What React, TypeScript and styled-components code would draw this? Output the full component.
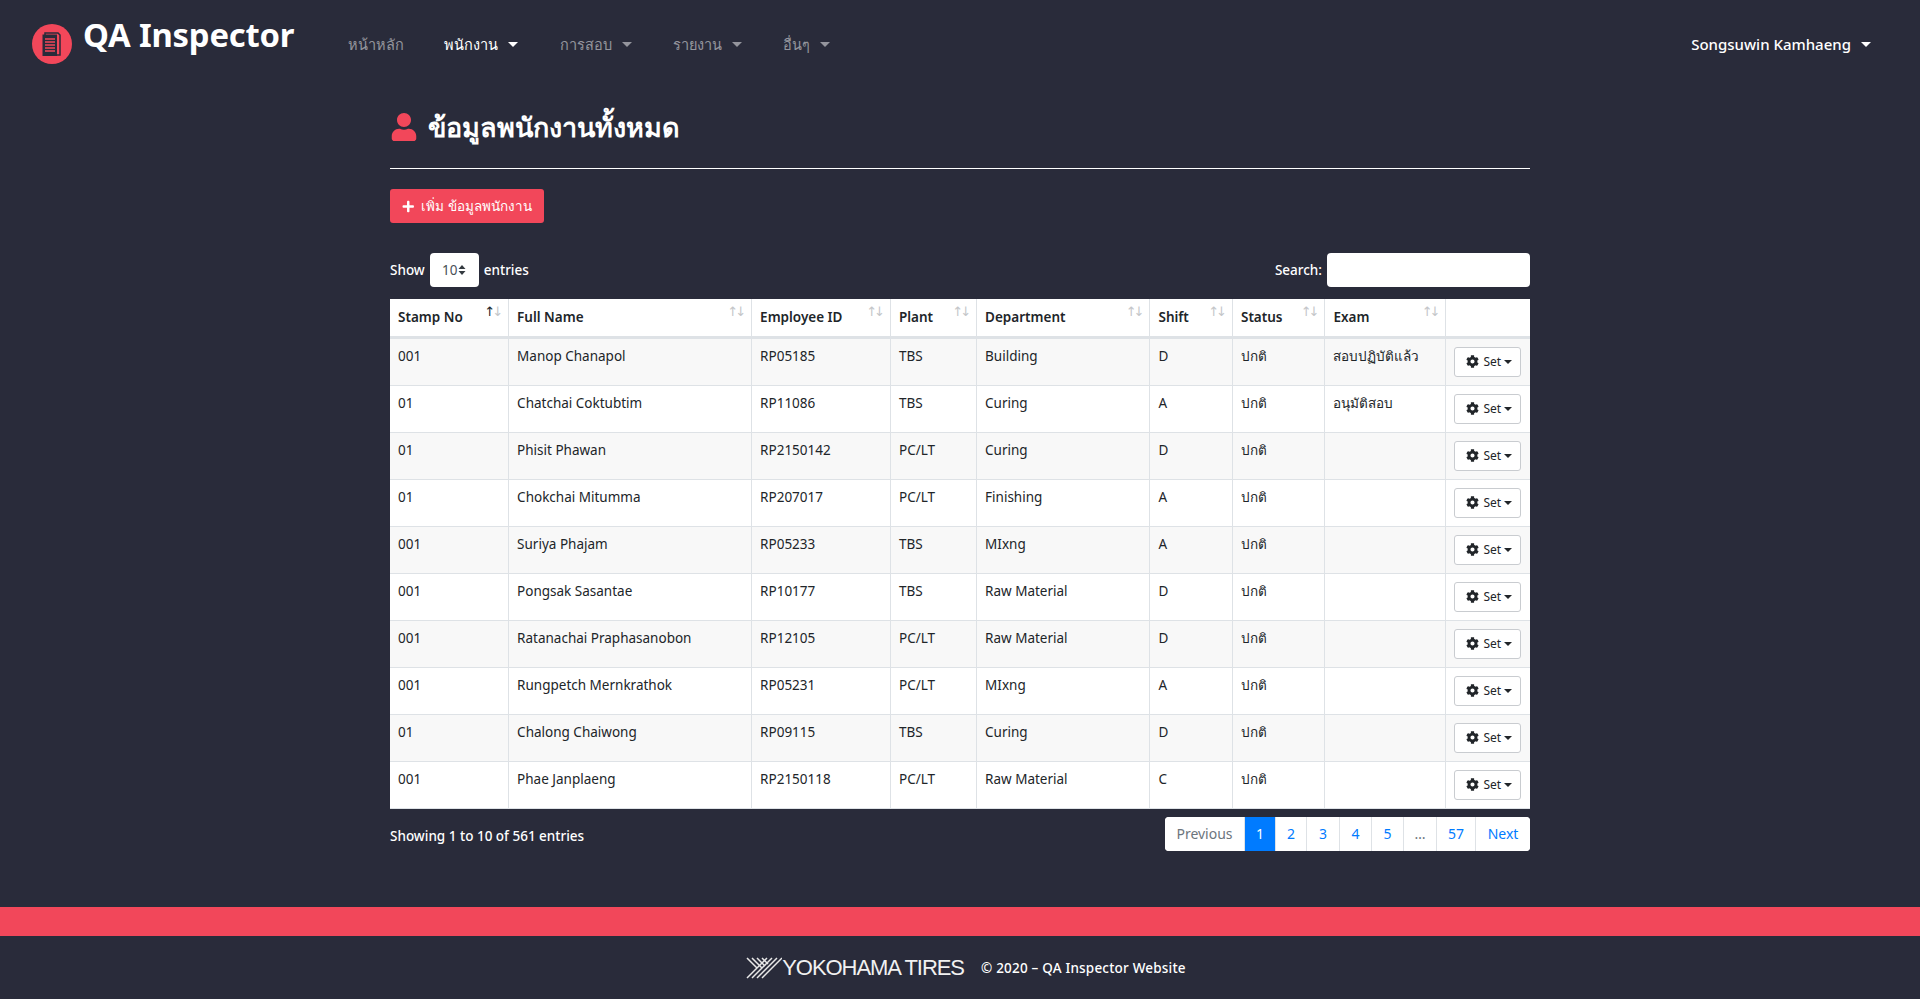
import React from 'react'
import styled, { createGlobalStyle } from 'styled-components'
import { FaCog, FaPlus, FaUser } from 'react-icons/fa'

const FONT = `'Noto Sans', 'Open Sans', 'DejaVu Sans', sans-serif`
const RED = '#f2475a'
const DARK = '#292b3a'

const COLUMNS = [
  { label: 'Stamp No', width: 118.6 },
  { label: 'Full Name', width: 243 },
  { label: 'Employee ID', width: 138.9 },
  { label: 'Plant', width: 86.1 },
  { label: 'Department', width: 173.4 },
  { label: 'Shift', width: 82.5 },
  { label: 'Status', width: 92.5 },
  { label: 'Exam', width: 121 },
  { label: '', width: 84 },
]

const ROWS = [
  ['001', 'Manop Chanapol', 'RP05185', 'TBS', 'Building', 'D', 'ปกติ', 'สอบปฏิบัติแล้ว'],
  ['01', 'Chatchai Coktubtim', 'RP11086', 'TBS', 'Curing', 'A', 'ปกติ', 'อนุมัติสอบ'],
  ['01', 'Phisit Phawan', 'RP2150142', 'PC/LT', 'Curing', 'D', 'ปกติ', ''],
  ['01', 'Chokchai Mitumma', 'RP207017', 'PC/LT', 'Finishing', 'A', 'ปกติ', ''],
  ['001', 'Suriya Phajam', 'RP05233', 'TBS', 'MIxng', 'A', 'ปกติ', ''],
  ['001', 'Pongsak Sasantae', 'RP10177', 'TBS', 'Raw Material', 'D', 'ปกติ', ''],
  ['001', 'Ratanachai Praphasanobon', 'RP12105', 'PC/LT', 'Raw Material', 'D', 'ปกติ', ''],
  ['001', 'Rungpetch Mernkrathok', 'RP05231', 'PC/LT', 'MIxng', 'A', 'ปกติ', ''],
  ['01', 'Chalong Chaiwong', 'RP09115', 'TBS', 'Curing', 'D', 'ปกติ', ''],
  ['001', 'Phae Janplaeng', 'RP2150118', 'PC/LT', 'Raw Material', 'C', 'ปกติ', ''],
]

const PAGES = [
  { label: 'Previous', width: 79, kind: 'muted' },
  { label: '1', width: 31, kind: 'active' },
  { label: '2', width: 31, kind: 'link' },
  { label: '3', width: 33, kind: 'link' },
  { label: '4', width: 32, kind: 'link' },
  { label: '5', width: 32, kind: 'link' },
  { label: '…', width: 33, kind: 'muted' },
  { label: '57', width: 39, kind: 'link' },
  { label: 'Next', width: 55, kind: 'link' },
]

const GlobalStyle = createGlobalStyle`
  html, body {
    margin: 0;
    background: ${DARK};
    font-family: ${FONT};
  }
  * { box-sizing: border-box; }
`

const Navbar = styled.nav`
  height: 88px;
  display: flex;
  align-items: center;
  padding: 0 49px 0 32px;
  color: #fff;
`
const LogoMark = styled.svg`
  width: 40px;
  height: 40px;
  flex: none;
`
const Brand = styled.div`
  margin: 0 54px 0 11px;
  padding-bottom: 18px;
  font-size: 32.8px;
  line-height: 44px;
  font-weight: 700;
  white-space: nowrap;
  letter-spacing: -0.2px;
`
const NavLinks = styled.div`
  display: flex;
  align-items: center;
  flex: 1;
`
const NavItem = styled.div<{ $active?: boolean; $width: number }>`
  width: ${(p) => p.$width}px;
  font-size: 14.5px;
  white-space: nowrap;
  color: ${(p) => (p.$active ? '#fff' : 'rgba(255, 255, 255, 0.5)')};
  font-weight: ${(p) => (p.$active ? 500 : 400)};
`
const Caret = styled.span`
  display: inline-block;
  margin-left: 10px;
  vertical-align: 3px;
  border-top: 5px solid currentColor;
  border-left: 5px solid transparent;
  border-right: 5px solid transparent;
`
const UserMenu = styled.div`
  font-size: 15px;
  font-weight: 500;
  white-space: nowrap;
`
const Container = styled.main`
  width: 1140px;
  margin: 0 auto;
  color: #fff;
`
const TitleRow = styled.h1`
  margin: 0;
  height: 81px;
  display: flex;
  align-items: center;
  gap: 10px;
  font-size: 27px;
  font-weight: 700;
  border-bottom: 1px solid #fff;
  padding-bottom: 2px;
  svg {
    color: ${RED};
    font-size: 28px;
  }
`
const AddButton = styled.button`
  display: flex;
  align-items: center;
  gap: 7px;
  width: 154px;
  height: 34px;
  margin-top: 20px;
  padding: 0 12px;
  border: 0;
  border-radius: 3px;
  background: ${RED};
  color: #fff;
  font-family: ${FONT};
  font-size: 13.5px;
  white-space: nowrap;
`
const Controls = styled.div`
  display: flex;
  justify-content: space-between;
  align-items: center;
  margin-top: 30px;
  height: 34px;
  font-size: 13.5px;
  font-weight: 500;
`
const ControlGroup = styled.label`
  display: flex;
  align-items: center;
  gap: 5px;
  line-height: 32px;
`
const PageSize = styled.div`
  width: 49px;
  height: 34px;
  display: flex;
  align-items: center;
  justify-content: center;
  gap: 1px;
  background: #fff;
  border-radius: 4px;
  color: #495057;
  font-weight: 400;
`
const SizeArrows = styled.svg`
  width: 8px;
  height: 12px;
`
const SearchBox = styled.div`
  width: 203px;
  height: 34px;
  background: #fff;
  border-radius: 4px;
`
const Table = styled.table`
  width: 1140px;
  margin-top: 12px;
  table-layout: fixed;
  border-collapse: collapse;
  background: #fff;
  color: #212529;
  font-size: 13.5px;
`
const HeadCell = styled.th`
  position: relative;
  height: 38px;
  padding: 8px 8px 0;
  vertical-align: top;
  text-align: left;
  font-size: 13.5px;
  font-weight: 600;
  line-height: 20px;
  border-left: 1px solid #dee2e6;
  border-bottom: 3px solid #dee2e6;
  &:first-child { border-left: 0; }
`
const SortArrows = styled.span<{ $sorted?: boolean }>`
  position: absolute;
  top: 5px;
  right: 8px;
  font-family: 'DejaVu Sans', sans-serif;
  font-size: 13px;
  font-weight: 400;
  line-height: 16px;
  letter-spacing: -3px;
  color: #c4c6c9;
  &::before {
    content: '↑';
    color: ${(p) => (p.$sorted ? '#212529' : 'inherit')};
  }
  &::after { content: '↓'; }
`
const Row = styled.tr`
  height: 47px;
  &:nth-child(odd) { background: #f8f8f8; }
  border-bottom: 1px solid #dee2e6;
`
const Cell = styled.td`
  padding: 8px;
  vertical-align: top;
  line-height: 18px;
  border-left: 1px solid #dee2e6;
  white-space: nowrap;
  &:first-child { border-left: 0; }
`
const SetButton = styled.button`
  display: flex;
  align-items: center;
  width: 67px;
  height: 30px;
  padding: 0 0 0 11px;
  background: #fff;
  border: 1px solid #c9ccd0;
  border-radius: 3px;
  color: #212529;
  font-family: ${FONT};
  font-size: 12px;
  svg { font-size: 13px; margin-right: 4px; }
`
const SmallCaret = styled.span`
  margin-left: 3px;
  border-top: 4px solid currentColor;
  border-left: 4px solid transparent;
  border-right: 4px solid transparent;
`
const Footing = styled.div`
  display: flex;
  justify-content: space-between;
  align-items: flex-start;
  margin-top: 8px;
  height: 34px;
  font-size: 14px;
  font-weight: 500;
`
const Showing = styled.div`
  font-size: 13.5px;
  line-height: 38px;
`
const Pagination = styled.div`
  display: flex;
  height: 34px;
  background: #fff;
  border-radius: 4px;
  overflow: hidden;
`
const PageLink = styled.div<{ $kind: string; $width: number }>`
  width: ${(p) => p.$width}px;
  display: flex;
  align-items: center;
  justify-content: center;
  border-left: 1px solid #dee2e6;
  font-weight: 400;
  background: ${(p) => (p.$kind === 'active' ? '#007bff' : '#fff')};
  color: ${(p) => (p.$kind === 'active' ? '#fff' : p.$kind === 'muted' ? '#6c757d' : '#007bff')};
  &:first-child { border-left: 0; }
`
const RedBar = styled.div`
  height: 29px;
  margin-top: 56px;
  background: ${RED};
`
const Footer = styled.footer`
  height: 64px;
  display: flex;
  align-items: center;
  justify-content: center;
  gap: 17px;
  color: #fff;
  padding-left: 12px;
`
const FooterLogo = styled.div`
  display: flex;
  align-items: center;
  gap: 0;
`
const Wordmark = styled.span`
  font-family: 'Liberation Sans', sans-serif;
  font-size: 22px;
  letter-spacing: -1.05px;
  color: #f1f1f1;
  white-space: nowrap;
`
const Copyright = styled.div`
  font-size: 13.5px;
  font-weight: 500;
  letter-spacing: 0.2px;
`

const DocLogo = () => (
  <LogoMark viewBox="0 0 40 40">
    <circle cx="20" cy="20" r="20" fill={RED} />
    <path d="M13 9h13l2 2v20H13z" fill="none" stroke={DARK} strokeWidth="1.5" />
    <path d="M10.5 10.5h14.5v21.5H10.5z" fill={DARK} />
    <path d="M13 15h10M13 18h10M13 21h10M13 24h10M13 27h10" stroke={RED} strokeWidth="1.4" />
  </LogoMark>
)

const TireMark = () => (
  <svg width="36" height="22" viewBox="0 0 36 22">
    <g fill="none" stroke="#e8e8e8" strokeWidth="1.5">
      <path d="M1 1l10 10M6 1l10 10M11 1l8 8M16 1l6 6" />
      <path d="M36 1L16 21M31 1L11 21M26 1L6 21M21 1L1 21" />
    </g>
  </svg>
)

export default function App() {
  return (
    <>
      <GlobalStyle />
      <Navbar>
        <DocLogo />
        <Brand>QA Inspector</Brand>
        <NavLinks>
          <NavItem $width={96}>หน้าหลัก</NavItem>
          <NavItem $width={116} $active>
            พนักงาน<Caret />
          </NavItem>
          <NavItem $width={113}>
            การสอบ<Caret />
          </NavItem>
          <NavItem $width={110}>
            รายงาน<Caret />
          </NavItem>
          <NavItem $width={80}>
            อื่นๆ<Caret />
          </NavItem>
        </NavLinks>
        <UserMenu>
          Songsuwin Kamhaeng<Caret />
        </UserMenu>
      </Navbar>
      <Container>
        <TitleRow>
          <FaUser />
          ข้อมูลพนักงานทั้งหมด
        </TitleRow>
        <AddButton>
          <FaPlus size={13} />
          เพิ่ม ข้อมูลพนักงาน
        </AddButton>
        <Controls>
          <ControlGroup>
            Show
            <PageSize>
              10
              <SizeArrows viewBox="0 0 8 12">
                <path d="M4 1l3.5 4h-7zM4 11L.5 7h7z" fill="#343a40" />
              </SizeArrows>
            </PageSize>
            entries
          </ControlGroup>
          <ControlGroup>
            Search:
            <SearchBox />
          </ControlGroup>
        </Controls>
        <Table>
          <colgroup>
            {COLUMNS.map((c, i) => (
              <col key={i} style={{ width: c.width }} />
            ))}
          </colgroup>
          <thead>
            <tr>
              {COLUMNS.map((c, i) => (
                <HeadCell key={i}>
                  {c.label}
                  {c.label && <SortArrows $sorted={i === 0} />}
                </HeadCell>
              ))}
            </tr>
          </thead>
          <tbody>
            {ROWS.map((row, i) => (
              <Row key={i}>
                {row.map((value, j) => (
                  <Cell key={j}>{value}</Cell>
                ))}
                <Cell>
                  <SetButton>
                    <FaCog />
                    Set
                    <SmallCaret />
                  </SetButton>
                </Cell>
              </Row>
            ))}
          </tbody>
        </Table>
        <Footing>
          <Showing>Showing 1 to 10 of 561 entries</Showing>
          <Pagination>
            {PAGES.map((p) => (
              <PageLink key={p.label} $kind={p.kind} $width={p.width}>
                {p.label}
              </PageLink>
            ))}
          </Pagination>
        </Footing>
      </Container>
      <RedBar />
      <Footer>
        <FooterLogo>
          <TireMark />
          <Wordmark>YOKOHAMA TIRES</Wordmark>
        </FooterLogo>
        <Copyright>© 2020 – QA Inspector Website</Copyright>
      </Footer>
    </>
  )
}
